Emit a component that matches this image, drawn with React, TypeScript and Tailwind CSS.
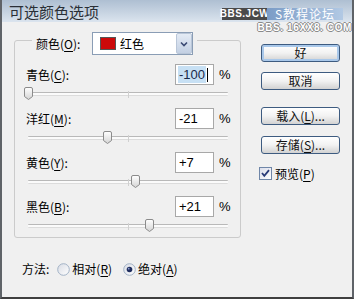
import React from "react";

const cjk = { fontFamily: '"Noto Sans CJK SC", "Noto Sans", sans-serif' };

function U({ c }: { c: string }) {
  return <span className="underline decoration-1 underline-offset-[2px]">{c}</span>;
}

function Thumb() {
  return (
    <svg width="9" height="13" viewBox="0 0 9 13">
      <defs>
        <linearGradient id="tg" x1="0" y1="0" x2="0" y2="1">
          <stop offset="0" stopColor="#ffffff" />
          <stop offset="1" stopColor="#d4d4d4" />
        </linearGradient>
      </defs>
      <path
        d="M2 0.5 H7 A1.5 1.5 0 0 1 8.5 2 V9.5 L4.5 12.5 L0.5 9.5 V2 A1.5 1.5 0 0 1 2 0.5 Z"
        fill="url(#tg)"
        stroke="#8b8b8b"
      />
    </svg>
  );
}

function Slider({ v }: { v: number }) {
  return (
    <div className="relative ml-[13px] h-[4px] w-[200px] rounded-[1px] border-t border-b border-t-[#b9b9b9] border-b-[#dcdcdc] bg-[#fbfbfb]">
      <div className="absolute left-[100px] top-[-2px] h-[7px] w-[1px] bg-[#d0d0d0]" />
      <div className="absolute top-[-6px]" style={{ left: v + 100 - 4.5 }}>
        <Thumb />
      </div>
    </div>
  );
}

function Btn({ children, def, cls }: { children: React.ReactNode; def?: boolean; cls?: string }) {
  return (
    <div
      className={
        "flex h-[18px] w-[79px] items-center justify-center rounded-[3px] border border-[#3d5b80] bg-gradient-to-b from-[#ffffff] via-[#f2f2f2] to-[#d2d2d2] text-[12px] leading-none text-[#111] " +
        (def ? "shadow-[inset_0_0_0_2px_#a9c8ea] " : "") +
        (cls || "")
      }
    >
      {children}
    </div>
  );
}

function Radio({ on }: { on?: boolean }) {
  return (
    <svg width="13" height="13" viewBox="0 0 13 13">
      <defs>
        <linearGradient id={on ? "rg1" : "rg0"} x1="0" y1="0" x2="1" y2="1">
          <stop offset="0" stopColor="#d8dce4" />
          <stop offset="1" stopColor="#ffffff" />
        </linearGradient>
      </defs>
      <circle cx="6.5" cy="6.5" r="5.8" fill={`url(#${on ? "rg1" : "rg0"})`} stroke="#a2b2c6" />
      {on && <circle cx="6.5" cy="6.5" r="2.8" fill="#1f2d5e" />}
      {on && <circle cx="5.7" cy="5.7" r="0.9" fill="#8a9bd0" />}
    </svg>
  );
}

function Check() {
  return (
    <svg width="13" height="13" viewBox="0 0 13 13">
      <defs>
        <linearGradient id="cg" x1="0" y1="0" x2="1" y2="1">
          <stop offset="0" stopColor="#d9dcea" />
          <stop offset="1" stopColor="#ffffff" />
        </linearGradient>
      </defs>
      <rect x="0.5" y="0.5" width="12" height="12" fill="url(#cg)" stroke="#6f86a8" />
      <path d="M3 6 L5.3 8.8 L10 3.2" fill="none" stroke="#283a78" strokeWidth="1.8" />
    </svg>
  );
}

const rows = [
  { name: "青色", key: "C", val: "-100", v: -100, focus: true },
  { name: "洋红", key: "M", val: "-21", v: -21 },
  { name: "黄色", key: "Y", val: "+7", v: 7 },
  { name: "黑色", key: "B", val: "+21", v: 21 },
];

export default function App() {
  return (
    <div
      className="flex h-[299px] w-[354px] flex-col overflow-hidden border-x-2 border-b-2 border-x-[#5f6368] border-b-[#3f3f3f] bg-[#f0f0f0] text-black"
      style={cjk}
    >
      <div className="relative flex h-[22px] shrink-0 items-center bg-gradient-to-b from-[#aebfd2] to-[#dbe4ee] pl-[7px]">
        <span className="text-[15px] leading-none text-[#2a2f36]">可选颜色选项</span>
        <div className="absolute right-[9px] top-[8px] flex h-[12px] items-stretch leading-[12px] text-white">
          <span
            className="flex w-[45px] items-center justify-center bg-[#4a4a4a] text-[10px] font-bold tracking-[0.5px]"
            style={{ fontFamily: '"Liberation Sans", Arial, sans-serif' }}
          >
            BBS.JCW
          </span>
          <span className="flex w-[76px] items-center justify-center bg-gradient-to-r from-[#7b9cc6] to-[#b2c9e4] text-[12px] leading-[12px] tracking-[1px]">
            S教程论坛
          </span>
        </div>
      </div>
      <div className="relative flex flex-1">
        <div
          className="pointer-events-none absolute right-[0px] top-[1px] text-[10px] font-bold leading-none tracking-[0.6px] text-white [text-shadow:1px_0_#8a8a8a,-1px_0_#8a8a8a,0_1px_#8a8a8a,0_-1px_#8a8a8a]"
          style={{ fontFamily: '"Liberation Sans", Arial, sans-serif' }}
        >
          BBS. 16XX8. COM
        </div>
        <div className="flex flex-col pl-[12px]">
          <fieldset className="mt-[3px] w-[227px] rounded-[3px] border border-[#cbcbcb] p-0">
            <legend className="ml-[17px] px-[4px] pt-[7px]">
              <div className="flex items-center">
                <span className="w-[56px] text-[12px] leading-none">
                  颜色(<U c="O" />):
                </span>
                <div className="flex h-[23px] w-[101px] items-center border border-[#8a9db5] bg-white">
                  <div className="ml-[7px] h-[13px] w-[16px] border border-[#555] bg-[#cc0a0a]" />
                  <span className="ml-[4px] text-[12px] leading-none">红色</span>
                  <div className="ml-auto flex h-[21px] w-[16px] items-center justify-center rounded-[2px] border border-[#b9c6d8] bg-gradient-to-b from-[#e4ebf5] to-[#c3d0e3]">
                    <svg width="8" height="6" viewBox="0 0 8 6">
                      <path d="M1 1.5 L4 4.5 L7 1.5" fill="none" stroke="#3b4a73" strokeWidth="1.6" />
                    </svg>
                  </div>
                </div>
              </div>
            </legend>
            <div className="flex flex-col gap-[9px] pb-[6px] pt-[9px]">
              {rows.map((r) => (
                <div key={r.key}>
                  <div className="flex h-[21px] items-center pl-[11px]">
                    <span className="flex-1 text-[12px] leading-none">
                      {r.name}(<U c={r.key} />):
                    </span>
                    <div
                      className="flex h-[21px] w-[39px] items-center border border-[#a8a8a8] bg-white pl-[2px] text-[13px] leading-none"
                      style={{ fontFamily: '"Liberation Sans", Arial, sans-serif' }}
                    >
                      {r.focus ? (
                        <>
                          <span className="bg-[#c7e0f4] px-[1px] py-[2px] text-[#1a2a4a]">{r.val}</span>
                          <span className="ml-[1px] h-[14px] w-[1px] bg-black" />
                        </>
                      ) : (
                        <span className="px-[1px]">{r.val}</span>
                      )}
                    </div>
                    <span
                      className="ml-[5px] w-[21px] text-[13px] leading-none"
                      style={{ fontFamily: '"Liberation Sans", Arial, sans-serif' }}
                    >
                      %
                    </span>
                  </div>
                  <div className="h-[14px] pt-[7px]">
                    <Slider v={r.v} />
                  </div>
                </div>
              ))}
            </div>
          </fieldset>
          <div className="mt-[21px] flex h-[20px] items-center pl-[8px] text-[12px] leading-none">
            <span>方法:</span>
            <span className="ml-[8px]">
              <Radio />
            </span>
            <span className="ml-[2px]">
              相对(<U c="R" />)
            </span>
            <span className="ml-[11px]">
              <Radio on />
            </span>
            <span className="ml-[2px]">
              绝对(<U c="A" />)
            </span>
          </div>
        </div>
        <div className="ml-[20px] mt-[22px] flex w-[79px] flex-col">
          <Btn def>好</Btn>
          <Btn cls="mt-[10px]">取消</Btn>
          <Btn cls="mt-[17px]">
            载入(<U c="L" />)...
          </Btn>
          <Btn cls="mt-[11px]">
            存储(<U c="S" />)...
          </Btn>
          <div className="ml-[-2px] mt-[13px] flex items-center text-[12px] leading-none">
            <Check />
            <span className="ml-[3px]">
              预览(<U c="P" />)
            </span>
          </div>
        </div>
      </div>
    </div>
  );
}
